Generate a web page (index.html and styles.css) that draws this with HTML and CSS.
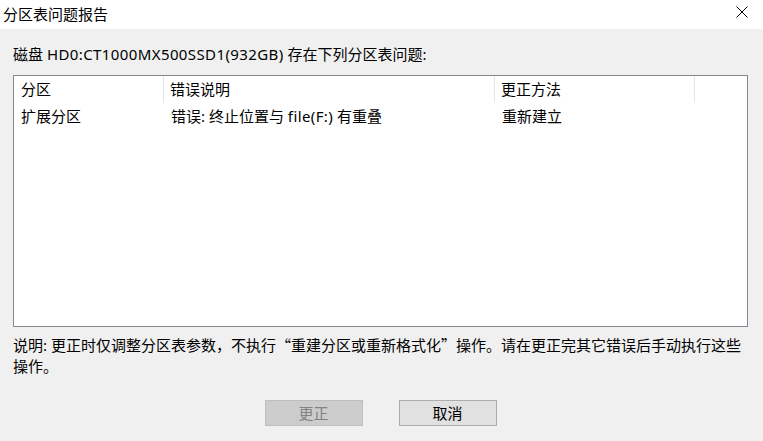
FILE: index.html
```html
<!DOCTYPE html>
<html lang="zh-CN">
<head>
<meta charset="utf-8">
<title>分区表问题报告</title>
<link rel="stylesheet" href="styles.css">
</head>
<body>
<div class="dialog">
  <div class="titlebar">
    <span class="title">分区表问题报告</span>
    <span class="close">
      <svg width="12" height="12" viewBox="0 0 12 12"><path d="M0.5 0.5 L11.5 11.5 M11.5 0.5 L0.5 11.5" stroke="#000" stroke-width="1" fill="none"/></svg>
    </span>
  </div>
  <div class="content">
    <div class="disk">磁盘 <span class="lat">HD0:CT1000MX500SSD1(932GB)</span> 存在下列分区表问题:</div>
    <div class="listbox">
      <div class="row header">
        <div class="cell">分区</div>
        <div class="cell">错误说明</div>
        <div class="cell">更正方法</div>
        <div class="cell"></div>
      </div>
      <div class="row">
        <div class="cell">扩展分区</div>
        <div class="cell">错误: 终止位置与 <span class="lat">file(F:)</span> 有重叠</div>
        <div class="cell">重新建立</div>
        <div class="cell"></div>
      </div>
    </div>
    <div class="note">说明: 更正时仅调整分区表参数，不执行<span class="cjk">“</span>重建分区或重新格式化<span class="cjk">”</span>操作。请在更正完其它错误后手动执行这些<br>操作。</div>
    <div class="buttons">
      <button class="btn disabled" disabled>更正</button>
      <button class="btn">取消</button>
    </div>
  </div>
</div>
</body>
</html>
```
FILE: styles.css
```css
html, body {
  margin: 0;
  padding: 0;
  background: #f0f0f0;
}
body {
  font-family: "Noto Sans", "Noto Sans CJK SC", sans-serif;
  font-size: 15px;
  color: #000;
  width: 763px;
  height: 441px;
  overflow: hidden;
}
.dialog {
  display: flex;
  flex-direction: column;
  height: 441px;
}
.titlebar {
  height: 29px;
  background: #fff;
  display: flex;
  align-items: center;
  justify-content: space-between;
  padding: 0 15px 0 3px;
}
.title {
  font-size: 15px;
  line-height: 20px;
  margin-top: -1px;
}
.close {
  display: flex;
  width: 12px;
  height: 12px;
  margin-top: -5px;
}
.content {
  display: flex;
  flex-direction: column;
  padding: 0 15px 0 13px;
}
.lat {
  letter-spacing: 0.4px;
}
.cjk {
  font-family: "Noto Sans CJK SC", sans-serif;
}
.disk {
  margin-top: 15px;
  line-height: 20px;
  height: 20px;
}
.listbox {
  margin-top: 11px;
  height: 250px;
  background: #fff;
  border: 1px solid #828790;
}
.row {
  display: grid;
  grid-template-columns: 150px 331px 200px 53px;
  height: 27px;
}
.header .cell {
  border-right: 1px solid #e5e5e5;
}
.header .cell:last-child {
  border-right: none;
}
.cell {
  padding: 0 7px;
  line-height: 26px;
  white-space: nowrap;
  overflow: hidden;
}
.header .cell + .cell {
  padding-left: 6px;
}
.row:not(.header) .cell + .cell {
  padding-left: 7px;
}
.note {
  margin-top: 7px;
  line-height: 21px;
  white-space: nowrap;
}
.buttons {
  display: flex;
  justify-content: center;
  gap: 36px;
  margin-top: 23px;
}
.btn {
  width: 98px;
  height: 26px;
  font-family: "Noto Sans", "Noto Sans CJK SC", sans-serif;
  font-size: 15px;
  line-height: 20px;
  padding: 0;
  background: #e1e1e1;
  border: 1px solid #adadad;
  color: #000;
  border-radius: 0;
}
.btn.disabled {
  background: #cccccc;
  border-color: #bfbfbf;
  color: #838383;
}
```
